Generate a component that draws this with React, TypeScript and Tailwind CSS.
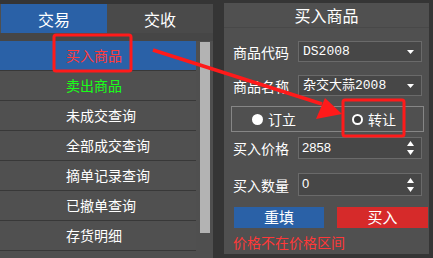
const menu = [
  { label: '买入商品', color: 'text-[#ff3b3b]', active: true },
  { label: '卖出商品', color: 'text-[#19ff19]' },
  { label: '未成交查询', color: 'text-white' },
  { label: '全部成交查询', color: 'text-white' },
  { label: '摘单记录查询', color: 'text-white' },
  { label: '已撤单查询', color: 'text-white' },
  { label: '存货明细', color: 'text-white' },
];

const cjk = "font-['Noto_Sans_CJK_SC',sans-serif]";

function Caret() {
  return (
    <svg width="9" height="6" viewBox="0 0 9 6" className="shrink-0">
      <path d="M1 1h7L4.5 5z" fill="#fff" />
    </svg>
  );
}

function Spinner() {
  return (
    <svg width="9" height="16" viewBox="0 0 9 16" className="shrink-0">
      <path d="M4.5 1L8 6H1z" fill="#fff" />
      <path d="M1 10h7l-3.5 5z" fill="#fff" />
    </svg>
  );
}

function SelectBox({ value }: { value: string }) {
  return (
    <div className="w-[124px] h-[21px] border border-[#6a6a6a] bg-[#474747] flex items-center pl-[4px] pr-[6px]">
      <span className="flex-1 text-white text-[13px] leading-none font-['Liberation_Mono','Noto_Sans_CJK_SC',monospace]">{value}</span>
      <Caret />
    </div>
  );
}

function NumberBox({ value, h }: { value: string; h: string }) {
  return (
    <div className={`w-[124px] ${h} border border-[#6a6a6a] bg-[#474747] flex items-center pl-[3px] pr-[6px]`}>
      <span className="flex-1 self-start mt-[3px] text-white text-[13px] leading-none font-['Liberation_Sans',sans-serif]">{value}</span>
      <Spinner />
    </div>
  );
}

function Row({ label, children, mt }: { label: string; children: React.ReactNode; mt: string }) {
  return (
    <div className={`flex items-center ${mt}`}>
      <span className="w-[74px] shrink-0 pl-[9px] text-white text-[14px] leading-none whitespace-nowrap">{label}</span>
      {children}
    </div>
  );
}

export default function App() {
  return (
    <div className={`relative w-[433px] h-[258px] bg-[#353535] flex overflow-hidden ${cjk}`}>

      {/* Left: tabs + list */}
      <div className="w-[213px] mt-[4px] bg-[#4f4f4f] flex flex-col">
        <div className="h-[29px] flex">
          <div className="ml-px w-[106px] bg-[#2a61a7] text-white text-[16px] flex items-center justify-center">交易</div>
          <div className="flex-1 bg-[#4a4a4a] text-white text-[16px] flex items-center justify-center">交收</div>
        </div>
        <div className="h-[8px] bg-[#464646]" />
        <div className="flex flex-1">
          <div className="w-[196px] flex flex-col">
            {menu.map((m) => (
              <div
                key={m.label}
                className={`h-[30px] border-b border-[#383838] flex items-center pl-[66px] text-[14px] ${m.color} ${m.active ? 'bg-[#2a61a7]' : 'bg-[#505050]'}`}
              >
                {m.label}
              </div>
            ))}
          </div>
          <div className="flex-1 flex justify-center pt-px">
            <div className="w-[10px] h-[191px] bg-[#b3b3b3]" />
          </div>
        </div>
      </div>

      {/* Right: buy form */}
      <div className="ml-[11px] mt-[3px] w-[205px] h-[251px] bg-[#505050] flex flex-col">
        <div className="h-[25px] border-b border-[#484848] flex items-center justify-center text-white text-[16px]">买入商品</div>

        <Row label="商品代码" mt="mt-[13px]">
          <SelectBox value="DS2008" />
        </Row>
        <Row label="商品名称" mt="mt-[13px]">
          <SelectBox value="杂交大蒜2008" />
        </Row>

        <div className="ml-[7px] mt-[10px] w-[193px] h-[26px] border border-[#868686] flex items-center text-white text-[14px]">
          <div className="w-[96px] flex items-center pl-[20px] gap-[5px]">
            <span className="w-[11px] h-[11px] rounded-full bg-white" />
            <span>订立</span>
          </div>
          <div className="flex items-center pl-[24px] gap-[5px]">
            <span className="w-[11px] h-[11px] rounded-full border-[2.5px] border-white bg-[#3a3a3a]" />
            <span>转让</span>
          </div>
        </div>

        <Row label="买入价格" mt="mt-[5px]">
          <NumberBox value="2858" h="h-[22px]" />
        </Row>
        <Row label="买入数量" mt="mt-[14px]">
          <NumberBox value="0" h="h-[23px]" />
        </Row>

        <div className="flex mt-[11px] pl-[10px] gap-[13px]">
          <button className="w-[90px] h-[21px] bg-[#2a61a7] text-white text-[15px] flex items-center justify-center">重填</button>
          <button className="w-[91px] h-[21px] bg-[#d62a2a] text-white text-[15px] flex items-center justify-center">买入</button>
        </div>
        <div className="mt-[7px] pl-[9px] text-[14px] leading-none text-[#ff3838]">价格不在价格区间</div>
      </div>

      {/* Annotation overlay */}
      <svg className="absolute inset-0 pointer-events-none" width="433" height="258" viewBox="0 0 433 258">
        <rect x="54" y="35" width="77" height="36" rx="2" fill="none" stroke="#ff1a1a" strokeWidth="3" />
        <rect x="343" y="100" width="61" height="36" rx="2" fill="none" stroke="#ff1a1a" strokeWidth="3" />
        <line x1="153" y1="50" x2="322" y2="104" stroke="#ff1a1a" strokeWidth="3.5" />
        <path d="M342 114 L316 119 L325 98 Z" fill="#ff1a1a" />
      </svg>
    </div>
  );
}
